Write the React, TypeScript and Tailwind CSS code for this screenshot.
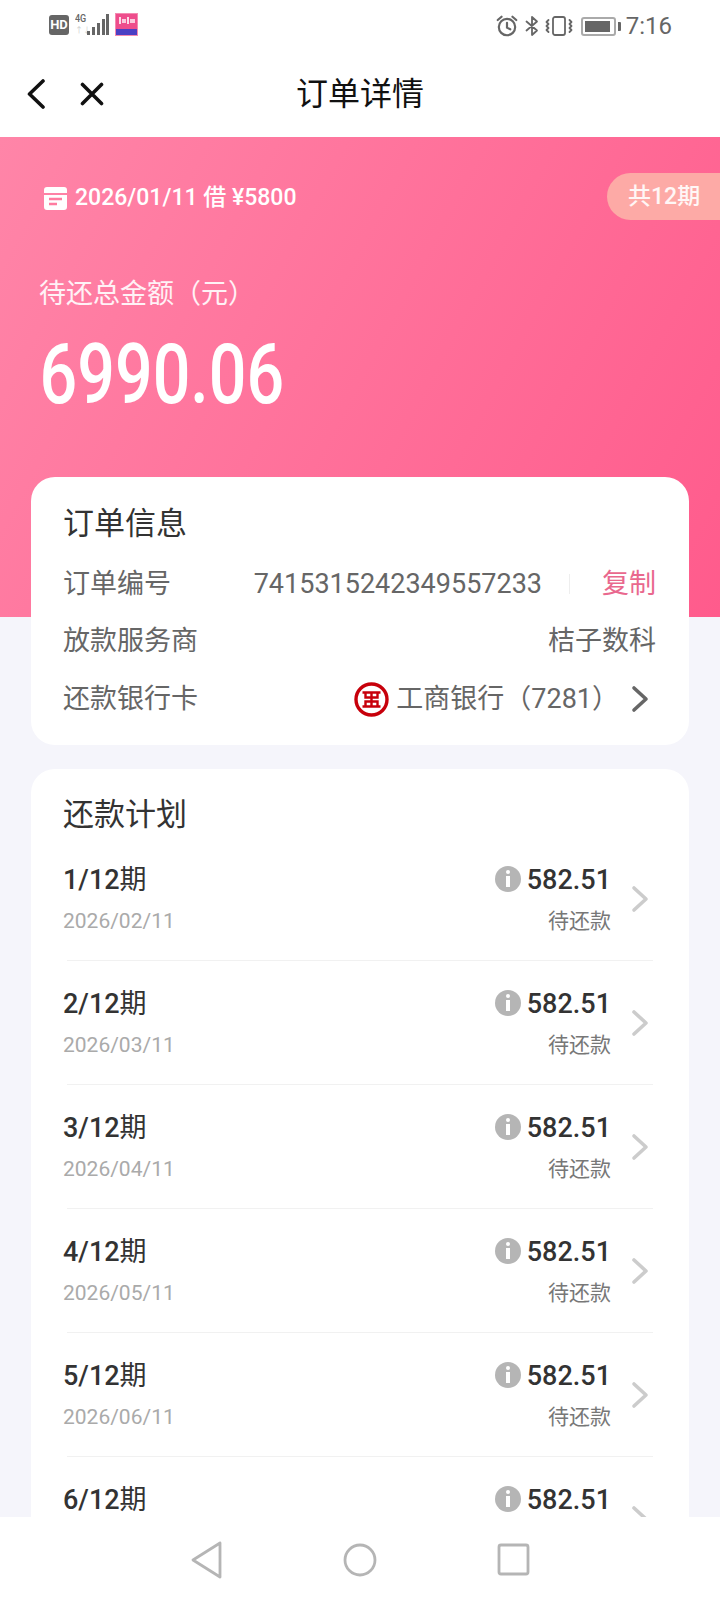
const plans = [
  { no: "1/12", date: "2026/02/11", status: "待还款" },
  { no: "2/12", date: "2026/03/11", status: "待还款" },
  { no: "3/12", date: "2026/04/11", status: "待还款" },
  { no: "4/12", date: "2026/05/11", status: "待还款" },
  { no: "5/12", date: "2026/06/11", status: "待还款" },
  // the rest of this row sits under the nav bar
  { no: "6/12", date: "", status: "" },
]

function StatusBar() {
  return (
    <div className="h-[55px] pt-[13px] pl-[49px] pr-[48px] flex items-start justify-between bg-white">
      <div className="flex items-start">
        <span className="mt-[2px] w-[20px] h-[20px] rounded-[3px] bg-[#666] text-white text-[13px] leading-[20px] font-bold text-center">HD</span>
        <div className="ml-[6px] w-[12px] flex flex-col items-start">
          <span className="text-[10px] leading-[11px] font-medium text-[#666] scale-x-90 origin-left">4G</span>
          <span className="mt-[3px] text-[8px] leading-[8px] text-[#ccc]">↑↓</span>
        </div>
        <svg width="22" height="22" viewBox="0 0 22 22" className="mt-[1px]" fill="#666">
          <rect x="0" y="17" width="3" height="4" />
          <rect x="5" y="13" width="3" height="8" />
          <rect x="10" y="9" width="3" height="12" />
          <rect x="15" y="5" width="3" height="16" />
          <rect x="19" y="0" width="3" height="21" />
        </svg>
        <div className="ml-[6px] w-[23px] h-[23px] flex flex-col bg-[#ee4d8c] border border-[#f48ab0]">
          <div className="flex-1 flex items-center justify-center gap-[1px] pb-[2px]">
            <span className="w-[2px] h-[7px] bg-white/80" />
            <span className="w-[4px] h-[4px] bg-white/70" />
            <span className="w-[2px] h-[7px] bg-white/80" />
            <span className="w-[5px] h-[4px] bg-white/70" />
          </div>
          <div className="h-[6px] bg-[#4a3fc4]" />
        </div>
      </div>
      <div className="flex items-center h-[24px] mt-[1px]">
        <svg width="24" height="24" viewBox="0 0 22 22" fill="none" stroke="#666" strokeWidth="2" strokeLinecap="round">
          <circle cx="11" cy="12" r="7.5" />
          <path d="M11 8v4.5l3 1.5M2.5 5.5 6 2.5M19.5 5.5 16 2.5" />
        </svg>
        <svg width="14" height="22" viewBox="0 0 14 22" className="ml-[6px]" fill="none" stroke="#666" strokeWidth="1.8" strokeLinejoin="round" strokeLinecap="round">
          <path d="M1.5 6.5 12 15.5 7 20V2l5 4.5L1.5 15.5" />
        </svg>
        <svg width="28" height="22" viewBox="0 0 28 22" className="ml-[6px]" fill="none" stroke="#666" strokeWidth="1.8" strokeLinecap="round" strokeLinejoin="round">
          <rect x="8" y="2" width="12" height="18" rx="2" />
          <path d="M3.5 5 1.5 7l2 2-2 2 2 2-2 2 2 2M24.5 5l2 2-2 2 2 2-2 2 2 2-2 2" />
        </svg>
        <div className="ml-[8px] w-[35px] h-[19px] rounded-[3px] border-2 border-[#aaa] p-[2px]">
          <div className="w-[25px] h-full bg-[#666]" />
        </div>
        <span className="ml-[2px] w-[3px] h-[9px] bg-[#666] rounded-r-[1px]" />
        <span className="ml-[5px] text-[24px] leading-[24px] text-[#666]">7:16</span>
      </div>
    </div>
  )
}

function Header() {
  return (
    <div className="relative h-[82px] bg-white flex items-center justify-center pb-[4px]">
      <div className="absolute left-[27px] top-[24px] flex items-center gap-[35px]">
        <svg width="18" height="30" viewBox="0 0 18 30" fill="none" stroke="#111" strokeWidth="3.6" strokeLinecap="round" strokeLinejoin="round">
          <path d="M16 2 2.5 15 16 28" />
        </svg>
        <svg width="24" height="24" viewBox="0 0 24 24" fill="none" stroke="#111" strokeWidth="3.6" strokeLinecap="round">
          <path d="M2.5 2.5 21.5 21.5M21.5 2.5 2.5 21.5" />
        </svg>
      </div>
      <h1 className="text-[32px] leading-[40px] text-[#111]">订单详情</h1>
    </div>
  )
}

function Hero() {
  return (
    <div className="h-[480px] bg-linear-[118deg] from-[#ff85a8] to-[#ff5b8c] text-white">
      <div className="pt-[36px] flex items-start justify-between">
        <div className="pl-[44px] pt-[12px] flex items-center gap-[8px]">
          <svg width="23" height="23" viewBox="0 0 23 23">
            <path fill="#fff" d="M3 0h17a3 3 0 0 1 3 3v3H0V3a3 3 0 0 1 3-3ZM0 8h23v12a3 3 0 0 1-3 3H3a3 3 0 0 1-3-3V8Z" />
            <path stroke="#ff7ca0" strokeWidth="2.4" d="M5 12h13M5 17h8" />
          </svg>
          <span className="text-[23px] leading-[26px] font-medium">2026/01/11 借 ¥5800</span>
        </div>
        <div className="w-[113px] h-[47px] rounded-l-full bg-[#fdaaa6] text-white/90 text-[23px] leading-[47px] font-medium pl-[21px]">共12期</div>
      </div>
      <p className="mt-[56px] pl-[39px] text-[27px] leading-[36px] text-white/90">待还总金额（元）</p>
      <p className="mt-[18px] pl-[50px] origin-left scale-x-[0.79] text-[84px] leading-[90px] font-medium">6990.06</p>
    </div>
  )
}

function IcbcLogo() {
  return (
    <svg width="35" height="35" viewBox="0 0 35 35" fill="none" stroke="#c7000b">
      <circle cx="17.5" cy="17.5" r="15.5" strokeWidth="3.4" />
      <path strokeWidth="2.4" d="M8.5 10.5h18M8.5 24.5h18M17.5 10.5v14M11.5 10.5v5h12v-5M11.5 24.5v-5h12v5" />
    </svg>
  )
}

function Chevron({ color }: { color: string }) {
  return (
    <svg width="18" height="28" viewBox="0 0 18 28" fill="none" stroke={color} strokeWidth="3.6" strokeLinecap="round" strokeLinejoin="round">
      <path d="M3 3 15 14 3 25" />
    </svg>
  )
}

function OrderCard() {
  return (
    <div className="relative mx-[31px] -mt-[140px] h-[268px] rounded-[24px] bg-white pl-[32px] pr-[33px] pt-[27px]">
      <h2 className="text-[31px] leading-[40px] text-[#333]">订单信息</h2>
      <div className="mt-[22px] flex items-center justify-between h-[36px] text-[27px] text-[#666]">
        <span>订单编号</span>
        <div className="flex items-center">
          <span>7415315242349557233</span>
          <span className="ml-[27px] w-[1px] h-[20px] bg-[#eee]" />
          <span className="ml-[32px] text-[#e9688e]">复制</span>
        </div>
      </div>
      <div className="mt-[21px] flex items-center justify-between h-[36px] text-[27px] text-[#666]">
        <span>放款服务商</span>
        <span>桔子数科</span>
      </div>
      <div className="mt-[22px] flex items-center justify-between h-[36px] text-[27px] text-[#666]">
        <span>还款银行卡</span>
        <div className="flex items-center">
          <IcbcLogo />
          <span className="ml-[7px]">工商银行（7281）</span>
          <span className="ml-[12px] mr-[7px]">
            <Chevron color="#666" />
          </span>
        </div>
      </div>
    </div>
  )
}

function InfoIcon() {
  return (
    <span className="-mt-[2px] w-[26px] h-[26px] rounded-full bg-[#b5b5b5] flex flex-col items-center justify-center">
      <span className="w-[4px] h-[4px] bg-white rounded-full" />
      <span className="mt-[2px] w-[4px] h-[11px] bg-white" />
    </span>
  )
}

function PlanRow({ no, date, status }: { no: string; date: string; status: string }) {
  return (
    <div>
      <div className="h-[123px] flex items-center">
        <div className="flex-1">
          <p className="text-[27px] leading-[36px] font-medium text-[#333]">
            {no}
            <span className="font-normal">期</span>
          </p>
          <p className="mt-[8px] h-[30px] text-[21px] leading-[30px] text-[#aaa]">{date}</p>
        </div>
        <div className="flex flex-col items-end">
          <div className="flex items-center gap-[6px] h-[36px]">
            <InfoIcon />
            <span className="text-[27px] leading-[36px] font-medium text-[#333]">582.51</span>
          </div>
          <p className="mt-[8px] h-[30px] text-[21px] leading-[30px] text-[#777]">{status}</p>
        </div>
        <span className="ml-[20px] mr-[7px]">
          <Chevron color="#ccc" />
        </span>
      </div>
      <div className="ml-[4px] mr-[3px] h-px bg-[#f1f1f1]" />
    </div>
  )
}

export default function App() {
  return (
    <div className="w-[720px] h-[1600px] flex flex-col overflow-hidden bg-[#f5f5fb] font-[Roboto,'Noto_Sans_CJK_SC',sans-serif]">
      <StatusBar />
      <Header />
      <div className="flex-1 min-h-0 overflow-hidden">
        <Hero />
        <OrderCard />
        <div className="mx-[31px] mt-[24px] rounded-[24px] bg-white pl-[32px] pr-[33px] pt-[26px]">
          <h2 className="text-[31px] leading-[40px] text-[#333]">还款计划</h2>
          <div className="mt-[2px]">
            {plans.map((p) => (
              <PlanRow key={p.no} no={p.no} date={p.date} status={p.status} />
            ))}
          </div>
        </div>
      </div>
      <div className="h-[83px] bg-white flex items-center justify-center gap-[120px] pt-[2px]">
        <svg width="33" height="38" viewBox="0 0 33 38" fill="none" stroke="#b5b5b5" strokeWidth="2.8" strokeLinejoin="round">
          <path d="M30 2 3 19l27 17Z" />
        </svg>
        <svg width="34" height="34" viewBox="0 0 34 34" fill="none" stroke="#b5b5b5" strokeWidth="2.8">
          <circle cx="17" cy="17" r="15" />
        </svg>
        <svg width="33" height="33" viewBox="0 0 33 33" fill="none" stroke="#b5b5b5" strokeWidth="2.8">
          <rect x="2" y="2" width="29" height="29" rx="2" />
        </svg>
      </div>
    </div>
  )
}
